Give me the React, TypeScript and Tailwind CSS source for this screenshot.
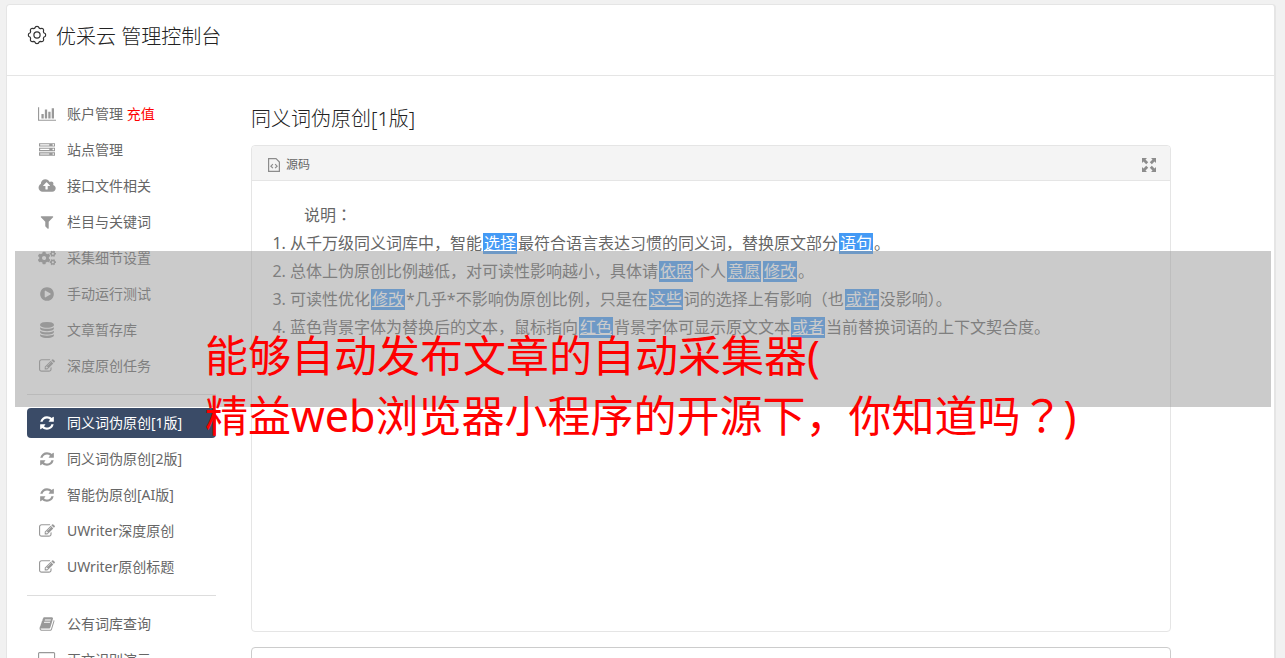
import React from "react";
import { FaCogs } from "react-icons/fa";

type Glyph = { w: number; d: string };

const glyphs: Record<string, Glyph> = {
  chart: {
    w: 2048,
    d: "M640 896v512h-256v-512h256zm384-512v1024h-256v-1024h256zm1024 1152v128h-2048v-1536h128v1408h1920zm-640-896v768h-256v-768h256zm384-384v1152h-256v-1152h256z",
  },
  server: {
    w: 1792,
    d: "M128 1408h1024v-128h-1024v128zm0-512h1024v-128h-1024v128zm1568 448q0-40-28-68t-68-28-68 28-28 68 28 68 68 28 68-28 28-68zm-1568-960h1024v-128h-1024v128zm1568 448q0-40-28-68t-68-28-68 28-28 68 28 68 68 28 68-28 28-68zm0-512q0-40-28-68t-68-28-68 28-28 68 28 68 68 28 68-28 28-68zm96 832v384h-1792v-384h1792zm0-512v384h-1792v-384h1792zm0-512v384h-1792v-384h1792z",
  },
  cloud: {
    w: 2048,
    d: "M1344 864q0-14-9-23l-352-352q-9-9-23-9t-23 9l-351 351q-10 12-10 24 0 14 9 23t23 9h224v352q0 13 9.5 22.5t22.5 9.5h192q13 0 22.5-9.5t9.5-22.5v-352h224q13 0 22.5-9.5t9.5-22.5zm640 288q0 159-112.5 271.5t-271.5 112.5h-1088q-185 0-316.5-131.5t-131.5-316.5q0-130 70-240t188-165q-2-30-2-43 0-212 150-362t362-150q156 0 285.5 87t188.5 231q71-62 166-62 106 0 181 75t75 181q0 76-41 138 130 31 213.5 135.5t83.5 238.5z",
  },
  filter: {
    w: 1792,
    d: "M1595 295q17 41-14 70l-493 493v742q0 42-39 59-13 5-25 5-27 0-45-19l-256-256q-19-19-19-45v-486l-493-493q-31-29-14-70 17-39 59-39h1280q42 0 59 39z",
  },
  play: {
    w: 1792,
    d: "M896 128q209 0 385.5 103t279.5 279.5 103 385.5-103 385.5-279.5 279.5-385.5 103-385.5-103-279.5-279.5-103-385.5 103-385.5 279.5-279.5 385.5-103zm384 823q32-18 32-55t-32-55l-544-320q-31-19-64-1-32 19-32 56v640q0 37 32 56 16 8 32 8 17 0 32-9z",
  },
  database: {
    w: 1792,
    d: "M896 768q237 0 443-43t325-127v170q0 69-103 128t-280 93.5-385 34.5-385-34.5-280-93.5-103-128v-170q119 84 325 127t443 43zm0 768q237 0 443-43t325-127v170q0 69-103 128t-280 93.5-385 34.5-385-34.5-280-93.5-103-128v-170q119 84 325 127t443 43zm0-384q237 0 443-43t325-127v170q0 69-103 128t-280 93.5-385 34.5-385-34.5-280-93.5-103-128v-170q119 84 325 127t443 43zm0-1152q208 0 385 34.5t280 93.5 103 128v128q0 69-103 128t-280 93.5-385 34.5-385-34.5-280-93.5-103-128v-128q0-69 103-128t280-93.5 385-34.5z",
  },
  edit: {
    w: 1792,
    d: "M888 1184l116-116-152-152-116 116v56h96v96h56zm440-720q-16-16-33 1l-350 350q-17 17-1 33t33-1l350-350q17-17 1-33zm80 594v190q0 119-84.5 203.5t-203.5 84.5h-832q-119 0-203.5-84.5t-84.5-203.5v-832q0-119 84.5-203.5t203.5-84.5h832q63 0 117 25 15 7 18 23 3 17-9 29l-49 49q-14 14-32 8-23-6-45-6h-832q-66 0-113 47t-47 113v832q0 66 47 113t113 47h832q66 0 113-47t47-113v-126q0-13 9-22l64-64q15-15 35-7t20 29zm-96-738l288 288-672 672h-288v-288zm444 132l-92 92-288-288 92-92q28-28 68-28t68 28l152 152q28 28 28 68t-28 68z",
  },
  refresh: {
    w: 1792,
    d: "M1639 1056q0 5-1 7-64 268-268 434.5t-478 166.5q-146 0-282.5-55t-243.5-157l-129 129q-19 19-45 19t-45-19-19-45v-448q0-26 19-45t45-19h448q26 0 45 19t19 45-19 45l-137 137q71 66 161 102t187 36q134 0 250-65t186-179q11-17 53-117 8-23 30-23h192q13 0 22.5 9.5t9.5 22.5zm25-800v448q0 26-19 45t-45 19h-448q-26 0-45-19t-19-45 19-45l138-138q-148-137-349-137-134 0-250 65t-186 179q-11 17-53 117-8 23-30 23h-199q-13 0-22.5-9.5t-9.5-22.5v-7q65-268 270-434.5t480-166.5q146 0 284 55.5t245 156.5l130-129q19-19 45-19t45 19 19 45z",
  },
  book: {
    w: 1792,
    d: "M1703 478q40 57 18 129l-275 906q-19 64-76.5 107.5t-122.5 43.5h-923q-77 0-148.5-53.5t-99.5-131.5q-24-67-2-127 0-4 3-27t4-37q1-8-3-21.5t-3-19.5q2-11 8-21t16.5-23.5 16.5-23.5q23-38 45-91.5t30-91.5q3-10 .5-30t-.5-28q3-11 17-28t17-23q21-36 42-92t25-90q1-9-2.5-32t.5-28q4-13 22-30.5t22-22.5q19-26 42.5-84.5t27.5-96.5q1-8-3-25.5t-2-26.5q2-8 9-18t18-23 17-21q8-12 16.5-30.5t15-35 16-36 19.5-32 26.5-23.5 36-11.5 47.5 5.5l-1 3q38-9 51-9h761q74 0 114 56t18 130l-274 906q-36 119-71.5 153.5t-128.5 34.5h-869q-27 0-38 15-11 16-1 43 24 70 144 70h923q29 0 56-15.5t35-41.5l300-987q7-22 5-57 38 15 59 43zm-1064 2q-4 13 2 22.5t20 9.5h608q13 0 25.5-9.5t16.5-22.5l21-64q4-13-2-22.5t-20-9.5h-608q-13 0-25.5 9.5t-16.5 22.5zm-83 256q-4 13 2 22.5t20 9.5h608q13 0 25.5-9.5t16.5-22.5l21-64q4-13-2-22.5t-20-9.5h-608q-13 0-25.5 9.5t-16.5 22.5z",
  },
  desktop: {
    w: 1920,
    d: "M1792 992v-832q0-13-9.5-22.5t-22.5-9.5h-1600q-13 0-22.5 9.5t-9.5 22.5v832q0 13 9.5 22.5t22.5 9.5h1600q13 0 22.5-9.5t9.5-22.5zm128-832v1088q0 66-47 113t-113 47h-544q0 37 16 77.5t32 71 16 43.5q0 26-19 45t-45 19h-512q-26 0-45-19t-19-45q0-14 16-44t32-70 16-78h-544q-66 0-113-47t-47-113v-1088q0-66 47-113t113-47h1600q66 0 113 47t47 113z",
  },
};

function Icon({ name }: { name: string }) {
  if (name === "cogs") return <FaCogs className="h-4 w-[18px]" aria-hidden="true" />;
  const g = glyphs[name];
  return (
    <svg className="h-4 w-auto" viewBox={`0 0 ${g.w} 1792`} fill="currentColor" aria-hidden="true">
      <path d={g.d} />
    </svg>
  );
}

function GearIcon() {
  return (
    <svg className="size-5 text-[#333]" viewBox="0 0 20 20" fill="none" stroke="currentColor" strokeWidth="1.2" strokeLinejoin="round" aria-hidden="true">
      <path d="M8 2.9Q8.2 1.3 10 1.3T12 2.9Q12.4 3.5 13.6 3.6Q15.2 2.9 16.1 3.9T16.4 6.4Q16.5 7.6 17.1 8Q18.7 8.2 18.7 10T17.1 12Q16.5 12.4 16.4 13.6Q17.1 15.2 16.1 16.1T13.6 16.4Q12.4 16.5 12 17.1Q11.8 18.7 10 18.7T8 17.1Q7.6 16.5 6.4 16.4Q4.8 17.1 3.9 16.1T3.6 13.6Q3.5 12.4 2.9 12Q1.3 11.8 1.3 10T2.9 8Q3.5 7.6 3.6 6.4Q2.9 4.8 3.9 3.9T6.4 3.6Q7.6 3.5 8 2.9Z" />
      <circle cx="10" cy="10" r="3.1" />
    </svg>
  );
}

function FileCodeIcon() {
  return (
    <svg className="h-[14px] w-3 text-[#8c8c8c]" viewBox="0 0 12 14" fill="none" stroke="currentColor" strokeWidth="1.2" aria-hidden="true">
      <path d="M.6.6H8L11.4 4V13.4H.6Z" />
      <path d="M4.9 6.2L2.9 8.2L4.9 10.2M7.1 6.2L9.1 8.2L7.1 10.2" />
    </svg>
  );
}

function ExpandIcon() {
  return (
    <svg className="size-[14px]" viewBox="0 0 14 14" fill="currentColor" aria-hidden="true">
      <path d="M0 0H5L3.5 1.5L6.2 4.2L4.2 6.2L1.5 3.5L0 5ZM14 0V5L12.5 3.5L9.8 6.2L7.8 4.2L10.5 1.5L9 0ZM0 14V9L1.5 10.5L4.2 7.8L6.2 9.8L3.5 12.5L5 14ZM14 14H9L10.5 12.5L7.8 9.8L9.8 7.8L12.5 10.5L14 9Z" />
    </svg>
  );
}

type Item = { icon: string; label: string; extra?: string; active?: boolean };

const groups: Item[][] = [
  [
    { icon: "chart", label: "账户管理", extra: "充值" },
    { icon: "server", label: "站点管理" },
    { icon: "cloud", label: "接口文件相关" },
    { icon: "filter", label: "栏目与关键词" },
    { icon: "cogs", label: "采集细节设置" },
    { icon: "play", label: "手动运行测试" },
    { icon: "database", label: "文章暂存库" },
    { icon: "edit", label: "深度原创任务" },
  ],
  [
    { icon: "refresh", label: "同义词伪原创[1版]", active: true },
    { icon: "refresh", label: "同义词伪原创[2版]" },
    { icon: "refresh", label: "智能伪原创[AI版]" },
    { icon: "edit", label: "UWriter深度原创" },
    { icon: "edit", label: "UWriter原创标题" },
  ],
  [
    { icon: "book", label: "公有词库查询" },
    { icon: "desktop", label: "正文识别演示" },
  ],
];

function NavItem({ icon, label, extra, active }: Item) {
  return (
    <li>
      <a
        href="#"
        aria-current={active ? "page" : undefined}
        className={
          active
            ? "flex h-[30px] items-center gap-[10px] rounded bg-[#3a4b67] pl-[10px] text-sm text-white"
            : "flex h-[30px] items-center gap-[10px] rounded pl-[10px] text-sm text-[#666]"
        }
      >
        <span className={active ? "flex w-5 shrink-0 justify-center text-white" : "flex w-5 shrink-0 justify-center text-[#999]"}>
          <Icon name={icon} />
        </span>
        <span>
          {label}
          {extra && <span className="text-[#f00]"> {extra}</span>}
        </span>
      </a>
    </li>
  );
}

function Hl({ children }: { children: React.ReactNode }) {
  return (
    <a href="#" className="mx-px inline-block bg-[#449af5] px-px leading-[21px] text-white underline">
      {children}
    </a>
  );
}

/* Full-width marks set in the middle of their em box. */
function Mark({ children }: { children: React.ReactNode }) {
  return <span className="font-['Noto_Sans_CJK_JP',sans-serif] leading-none" lang="ja">{children}</span>;
}

export default function App() {
  return (
    <div className="relative h-screen overflow-hidden bg-[#f1f1f1] pt-1 pr-[9px] pl-[6px] font-['Noto_Sans','Noto_Sans_CJK_SC',sans-serif] text-[#666]">
      <div className="min-h-full rounded-t border-t border-r-2 border-l border-[#e5e5e5] bg-white">
        <header className="flex h-[71px] items-start gap-[9px] border-b border-[#e5e5e5] px-5 pt-4 text-[#222]">
          <span className="flex h-7 items-center">
            <GearIcon />
          </span>
          <h1 className="text-xl leading-8 font-light">优采云 管理控制台</h1>
        </header>

        <div className="flex gap-[35px] px-5 pt-[23px]">
          <nav className="w-[189px] shrink-0" aria-label="控制台">
            {groups.map((items, i) => (
              <React.Fragment key={i}>
                {i > 0 && <hr className="my-[13px] border-[#ddd]" />}
                <ul className="flex flex-col gap-[6px]">
                  {items.map((item) => (
                    <NavItem key={item.label} {...item} />
                  ))}
                </ul>
              </React.Fragment>
            ))}
          </nav>

          <main className="max-w-[920px] min-w-0 flex-1 pt-1">
            <h2 className="text-xl leading-8 font-light text-[#222]">同义词伪原创[1版]</h2>
            <section className="mt-[10px] min-h-[487px] rounded border border-[#e5e5e5]">
              <div className="flex h-[35px] items-center justify-between rounded-t border-b border-[#e5e5e5] bg-[#f4f4f4] pt-[3px] pr-[14px] pl-4">
                <div className="flex items-center gap-[6px] text-xs">
                  <FileCodeIcon />
                  <span>源码</span>
                </div>
                <button type="button" aria-label="全屏" className="text-[#8c8c8c]">
                  <ExpandIcon />
                </button>
              </div>
              <div className="px-5 pt-5 text-base leading-7">
                <p className="pl-8">
                  说明<Mark>：</Mark>
                </p>
                <ol className="list-decimal pl-[18px]">
                  <li>从千万级同义词库中，智能<Hl>选择</Hl>最符合语言表达习惯的同义词，替换原文部分<Hl>语句</Hl>。</li>
                  <li>总体上伪原创比例越低，对可读性影响越小，具体请<Hl>依照</Hl>个人<Hl>意愿</Hl><Hl>修改</Hl>。</li>
                  <li>可读性优化<Hl>修改</Hl>*几乎*不影响伪原创比例，只是在<Hl>这些</Hl>词的选择上有影响（也<Hl>或许</Hl>没影响）。</li>
                  <li>蓝色背景字体为替换后的文本，鼠标指向<Hl>红色</Hl>背景字体可显示原文文本<Hl>或者</Hl>当前替换词语的上下文契合度。</li>
                </ol>
              </div>
            </section>
            <section className="mt-[15px] h-12 rounded border border-[#ccc]" />
          </main>
        </div>
      </div>

      <div className="absolute top-[251px] right-[14px] left-[15px] h-[156px] bg-[#979797]/50" />
      <p className="absolute top-[326px] left-[205px] text-[43px] leading-[60px] whitespace-nowrap text-[#f00]">
        能够自动发布文章的自动采集器(
        <br />
        精益web浏览器小程序的开源下，你知道吗<Mark>？</Mark>)
      </p>
    </div>
  );
}
